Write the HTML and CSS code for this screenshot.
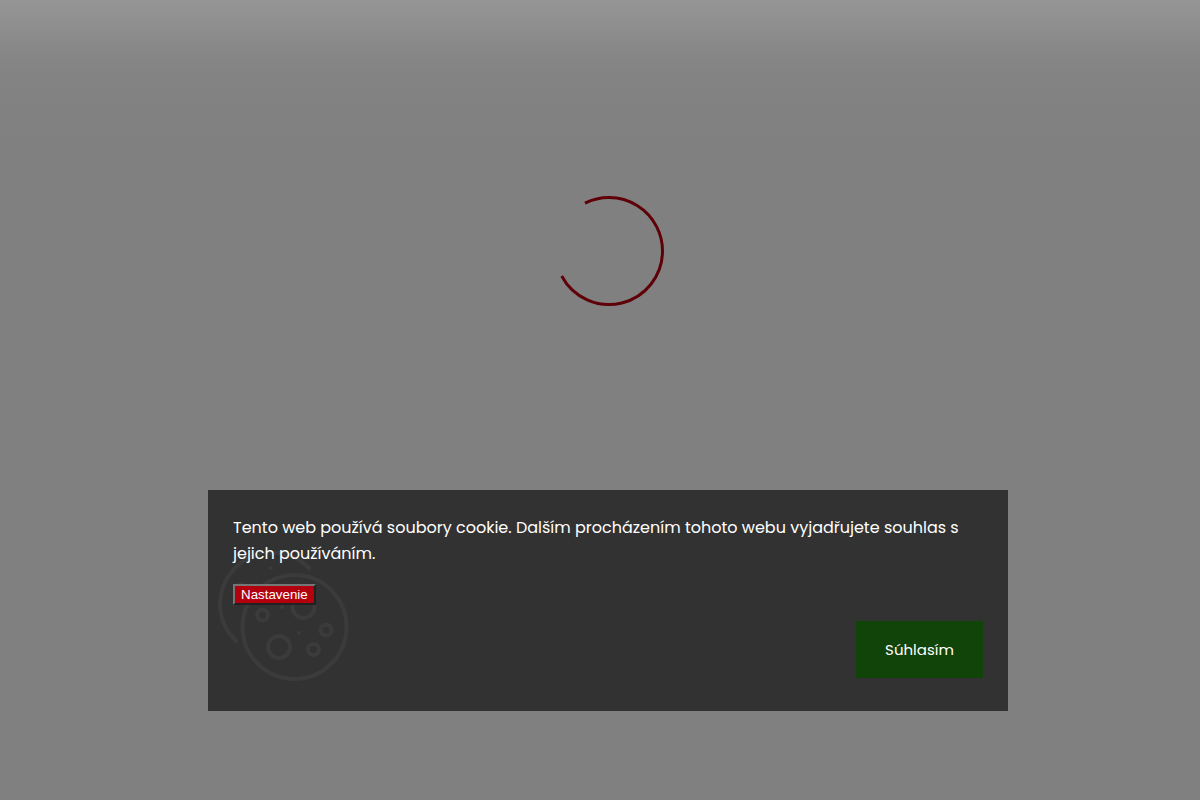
FILE: index.html
```html
<!DOCTYPE html>
<html lang="sk">
<head>
    <meta charset="UTF-8">
    <meta name="viewport" content="width=device-width, initial-scale=1">
    <title>Cookies</title>
    <link rel="stylesheet" href="styles.css">
</head>
<body>
    <div class="overlay">
        <div class="loader">
            <svg class="spinner" width="112" height="112" viewBox="0 0 112 112" aria-hidden="true">
                <path d="M33 8.200A53.500 53.500 0 0 1 110.500 56A53.500 53.500 0 0 1 9.700 81" fill="none" stroke="#5f0009" stroke-width="3"/>
            </svg>
        </div>

        <div class="cookie-area">
            <div class="cookie-bar">
                <svg class="cookie-icon" width="130" height="132" viewBox="0 0 130 132" aria-hidden="true">
                    <g fill="none" stroke="#3b3b3b" stroke-width="4" stroke-linecap="round">
                        <circle cx="76.500" cy="77" r="52"/>
                        <path d="M91 18A52 52 0 0 0 2 55A52 52 0 0 0 18 91"/>
                        <path d="M17 40A6 6 0 0 1 27 36"/>
                        <circle cx="44.500" cy="65" r="5.500"/>
                        <circle cx="85.500" cy="57" r="11"/>
                        <circle cx="108" cy="80" r="5.500"/>
                        <circle cx="95.500" cy="99.500" r="5.500"/>
                        <circle cx="61" cy="97" r="11"/>
                    </g>
                    <g fill="#3b3b3b">
                        <circle cx="81" cy="83" r="2"/>
                        <circle cx="64" cy="57" r="2"/>
                        <circle cx="52.500" cy="18" r="2"/>
                    </g>
                </svg>
                <div class="cookie-content">
                    <p>Tento web používá soubory cookie. Dalším procházením tohoto webu vyjadřujete souhlas s jejich používáním.</p>
                    <button type="button" class="btn-settings">Nastavenie</button>
                    <div class="cookie-actions">
                        <button type="button" class="btn-agree">Súhlasím</button>
                    </div>
                </div>
            </div>
        </div>
    </div>
</body>
</html>
```

FILE: styles.css
```css
body {
    margin: 0;
    font-family: Poppins, Inter, sans-serif;
    font-size: 16px;
    line-height: 26px;
    background: #808080;
}
.overlay {
    display: grid;
    grid-template-rows: 1fr 1fr;
    min-height: 100vh;
    padding-left: 16px;
    box-sizing: border-box;
    background: linear-gradient(#959595 0, #8f8f8f 24px, #878787 50px, #838383 75px, #818181 110px, #808080 150px);
}
.loader {
    display: flex;
    justify-content: center;
    align-items: center;
    padding-top: 102px;
}
.cookie-area {
    display: flex;
    justify-content: center;
    align-items: center;
}
.cookie-bar {
    position: relative;
    width: 100%;
    max-width: 800px;
    padding: 25px 25px 33px;
    box-sizing: border-box;
    background: #323232;
    color: #fff;
}
.cookie-icon {
    position: absolute;
    left: 10px;
    bottom: 29px;
    overflow: visible;
}
.cookie-content {
    position: relative;
}
.cookie-content p {
    margin: 0 0 17px;
}
.btn-settings {
    display: block;
    padding: 1px 6px;
    border: 2px solid;
    border-color: #767676 #212121 #212121 #767676;
    background: #b3000f;
    color: #fff;
    font-family: "Liberation Sans", Arial, sans-serif;
    cursor: pointer;
}
.cookie-actions {
    display: flex;
    justify-content: flex-end;
    margin-top: 16px;
}
.btn-agree {
    min-width: 127px;
    padding: 16px 28px 15px;
    border: 0;
    background: #104408;
    color: #fff;
    font-family: inherit;
    font-size: 15px;
    line-height: 26px;
    cursor: pointer;
}
```
